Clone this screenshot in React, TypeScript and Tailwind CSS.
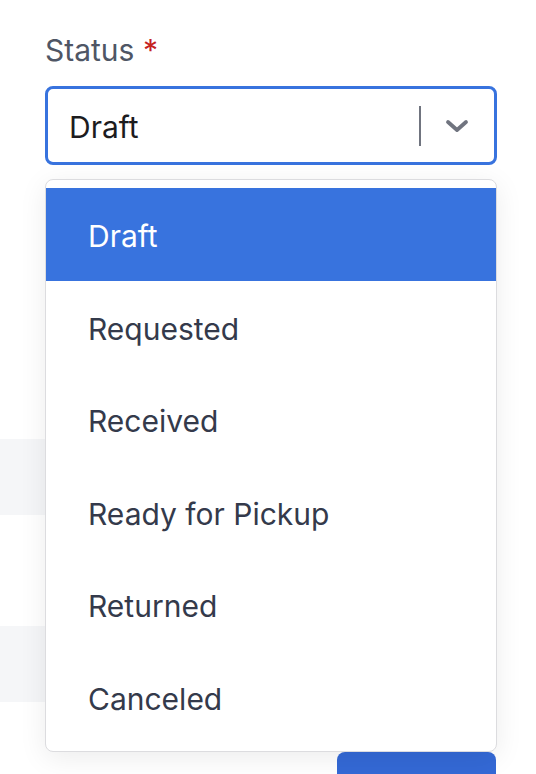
import React from 'react';

const options = ['Draft', 'Requested', 'Received', 'Ready for Pickup', 'Returned', 'Canceled'];

function StatusSelect() {
  return (
    <div className="px-[45px] pt-[32px]">
      <label className="block text-[30px] leading-[36px] text-[#4f5665]">
        Status <span className="text-[#c5221f]">*</span>
      </label>
      <div className="mt-[18px] flex h-[79px] w-[452px] items-center rounded-[8px] border-[3px] border-[#3873de] bg-white pl-[21px] pr-[25px]">
        <span className="flex-1 pt-[2px] text-[30px] leading-none text-[#1c1c1e]">Draft</span>
        <span className="h-[40px] w-[2px] bg-[#70747f]" />
        <svg
          className="ml-[24px] h-[16px] w-[24px] text-[#70747f]"
          viewBox="0 0 24 16"
          fill="none"
          stroke="currentColor"
          strokeWidth="3.8"
          strokeLinecap="round"
          strokeLinejoin="round"
        >
          <path d="M3 4l9 8 9-8" />
        </svg>
      </div>
    </div>
  );
}

function Menu() {
  return (
    <div className="absolute left-[45px] top-[179px] z-10 w-[452px] rounded-[8px] border border-[#dcdcdf] bg-white py-[8px] shadow-[0_6px_28px_rgba(0,0,0,0.08)]">
      {options.map((opt, i) => (
        <div
          key={opt}
          className={
            i === 0
              ? 'flex h-[92.5px] items-center bg-[#3873de] pl-[42px] pt-[5px] text-[30px] text-white'
              : 'flex h-[92.5px] items-center pl-[42px] pt-[5px] text-[30px] text-[#343a4b]'
          }
        >
          {opt}
        </div>
      ))}
    </div>
  );
}

export default function App() {
  return (
    <div className="relative h-[774px] w-full overflow-hidden bg-white font-['Inter',sans-serif]">
      <StatusSelect />
      <div className="mt-[274px] h-[76px] w-[300px] bg-[#f5f6f8]" />
      <div className="mt-[111px] h-[76px] w-[300px] bg-[#f5f6f8]" />
      <div className="ml-[337px] mt-[50px] h-[44px] w-[159px] rounded-[8px] bg-[#3469d6]" />
      <Menu />
    </div>
  );
}
